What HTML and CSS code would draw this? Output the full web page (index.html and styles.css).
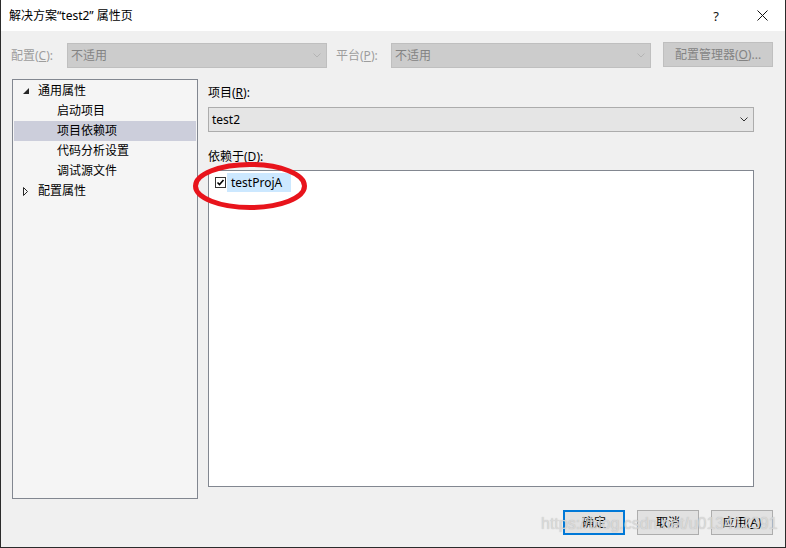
FILE: index.html
```html
<!DOCTYPE html>
<html lang="zh-CN">
<head>
<meta charset="utf-8">
<title>解决方案“test2” 属性页</title>
<link rel="stylesheet" href="styles.css">
</head>
<body>
<div class="window">
  <div class="titlebar">
    <span class="title">解决方案“test2” 属性页</span>
    <div class="tb-buttons">
      <span class="tb-btn help">?</span>
      <span class="tb-btn close">
        <svg width="11" height="11" viewBox="0 0 11 11"><path d="M0.5 0.5 L10.5 10.5 M10.5 0.5 L0.5 10.5" stroke="#111" stroke-width="1" fill="none"/></svg>
      </span>
    </div>
  </div>
  <div class="body">
    <div class="config-row">
      <span class="lbl lbl1">配置(<u>C</u>):</span>
      <div class="combo disabled">
        <span class="combo-text">不适用</span>
        <svg class="chev" width="8" height="5" viewBox="0 0 8 5"><polyline points="0.5,0.5 4,4 7.5,0.5" fill="none" stroke="#b4b4b4" stroke-width="1"/></svg>
      </div>
      <span class="lbl lbl2">平台(<u>P</u>):</span>
      <div class="combo disabled">
        <span class="combo-text">不适用</span>
        <svg class="chev" width="8" height="5" viewBox="0 0 8 5"><polyline points="0.5,0.5 4,4 7.5,0.5" fill="none" stroke="#b4b4b4" stroke-width="1"/></svg>
      </div>
      <button class="btn btn-mgr" disabled>配置管理器(<u>O</u>)...</button>
    </div>
    <div class="main">
      <div class="tree">
        <div class="row top">
          <span class="arrow"><svg width="6" height="6" viewBox="0 0 6 6"><polygon points="6,0 6,6 0,6" fill="#262626"/></svg></span>
          <span class="rtext">通用属性</span>
        </div>
        <div class="row child"><span class="rtext">启动项目</span></div>
        <div class="row child selected"><span class="rtext">项目依赖项</span></div>
        <div class="row child"><span class="rtext">代码分析设置</span></div>
        <div class="row child"><span class="rtext">调试源文件</span></div>
        <div class="row top">
          <span class="arrow"><svg width="6" height="9" viewBox="0 0 6 9"><polygon points="0.5,0.5 4.5,4.5 0.5,8.5" fill="none" stroke="#262626" stroke-width="1"/></svg></span>
          <span class="rtext">配置属性</span>
        </div>
      </div>
      <div class="props">
        <div class="plabel">项目(<u>R</u>):</div>
        <div class="combo proj">
          <span class="combo-text">test2</span>
          <svg class="chev" width="8" height="5" viewBox="0 0 8 5"><polyline points="0.5,0.5 4,4 7.5,0.5" fill="none" stroke="#333" stroke-width="1"/></svg>
        </div>
        <div class="plabel dep">依赖于(<u>D</u>):</div>
        <div class="listbox">
          <div class="item">
            <span class="cb"><svg width="11" height="11" viewBox="0 0 11 11"><rect x="0.5" y="0.5" width="10" height="10" fill="#fff" stroke="#333"/><polyline points="2.5,5.5 4.5,7.5 8.5,3" fill="none" stroke="#000" stroke-width="1.6"/></svg></span>
            <span class="itext">testProjA</span>
          </div>
        </div>
      </div>
    </div>
    <div class="footer">
      <button class="btn default">确定</button>
      <button class="btn">取消</button>
      <button class="btn">应用(<u>A</u>)</button>
    </div>
  </div>
  <svg class="annot" width="124" height="58" viewBox="0 0 124 58"><ellipse cx="61" cy="29" rx="54.5" ry="21.5" fill="none" stroke="#e8141c" stroke-width="5"/></svg>
  <div class="watermark">https://blog.csdn.net/u013412391</div>
</div>
</body>
</html>
```

FILE: styles.css
```css
* { box-sizing: border-box; }
html, body { margin: 0; padding: 0; }
body {
  width: 786px;
  height: 548px;
  overflow: hidden;
  font-family: "Noto Sans", "Noto Sans CJK SC", sans-serif;
  font-size: 12px;
  color: #000;
  background: #f0f0f0;
}
.window {
  position: relative;
  width: 786px;
  height: 548px;
  border-left: 1px solid #2b2b2b;
  border-right: 1px solid #2b2b2b;
  border-bottom: 1px solid #2b2b2b;
  background: #f0f0f0;
  display: flex;
  flex-direction: column;
}
.titlebar {
  height: 31px;
  background: #fff;
  display: flex;
  align-items: center;
  justify-content: space-between;
  flex: none;
}
.title {
  padding-left: 8px;
  padding-top: 1px;
  font-size: 12px;
  line-height: 30px;
  color: #000;
}
.tb-buttons { display: flex; height: 31px; }
.tb-btn {
  width: 46px;
  height: 31px;
  display: flex;
  align-items: center;
  justify-content: center;
}
.help { font-size: 13px; color: #111; font-family: "Noto Sans", sans-serif; }
.body {
  flex: 1;
  display: flex;
  flex-direction: column;
}
.config-row {
  margin-top: 12px;
  padding-left: 10px;
  height: 25px;
  display: flex;
  align-items: center;
}
.lbl { color: #9d9d9d; line-height: 25px; white-space: nowrap; }
.lbl1 { width: 56px; }
.lbl2 { width: 55px; margin-left: 9px; }
.combo {
  width: 260px;
  height: 25px;
  border: 1px solid #acacac;
  background: #e5e5e5;
  display: flex;
  align-items: center;
  justify-content: space-between;
  padding: 0 5px 0 3px;
}
.combo.disabled {
  background: #cccccc;
  border-color: #bfbfbf;
  color: #838383;
}
.combo-text { line-height: 23px; }
.chev { display: block; flex: none; }
.btn {
  font-family: "Noto Sans", "Noto Sans CJK SC", sans-serif;
  font-size: 12px;
  width: 62px;
  height: 25px;
  border: 1px solid #adadad;
  background: #e1e1e1;
  color: #000;
  padding: 0;
  margin: 0;
  line-height: 23px;
}
.btn-mgr {
  width: 110px;
  margin-left: 12px;
  margin-top: -2px;
  background: #cccccc;
  border-color: #bfbfbf;
  color: #838383;
}
.btn.default { border: 2px solid #0078d7; line-height: 21px; }
.main {
  margin-top: 11px;
  padding-left: 11px;
  display: flex;
  gap: 10px;
}
.tree {
  width: 186px;
  height: 420px;
  border: 1px solid #828790;
  background: #f5f5f5;
  padding: 1px 1px 0;
}
.row {
  height: 20px;
  display: flex;
  align-items: center;
  white-space: nowrap;
}
.row.top { padding-left: 9px; }
.row.child { padding-left: 43px; }
.row.selected { background: #cccedb; }
.arrow {
  width: 15px;
  height: 20px;
  display: flex;
  align-items: center;
}
.arrow svg { display: block; }
.rtext { line-height: 20px; }
.props {
  width: 546px;
  display: flex;
  flex-direction: column;
}
.plabel { height: 28px; line-height: 28px; }
.combo.proj { width: 546px; background: #e5e5e5; }
.plabel.dep { height: 38px; line-height: 20px; padding-top: 15px; }
.listbox {
  height: 317px;
  border: 1px solid #828790;
  background: #fff;
  padding-top: 2px;
}
.item {
  display: flex;
  align-items: center;
  height: 19px;
  padding-left: 6px;
}
.cb { width: 11px; height: 11px; display: block; margin-right: 1px; }
.cb svg { display: block; }
.itext {
  background: #cce8ff;
  height: 19px;
  line-height: 19px;
  padding: 0 4px;
  width: 64px;
}
.footer {
  margin-top: 11px;
  display: flex;
  justify-content: flex-end;
  gap: 12px;
  padding-right: 12px;
}
.annot {
  position: absolute;
  left: 188px;
  top: 157px;
  pointer-events: none;
}
.watermark {
  position: absolute;
  left: 540px;
  top: 515px;
  font-family: "Liberation Sans", Arial, sans-serif;
  font-size: 16px;
  color: rgba(225, 225, 225, 0.8);
  text-shadow: 0 0 1px rgba(140, 140, 140, 0.6);
  white-space: nowrap;
  pointer-events: none;
}
```
